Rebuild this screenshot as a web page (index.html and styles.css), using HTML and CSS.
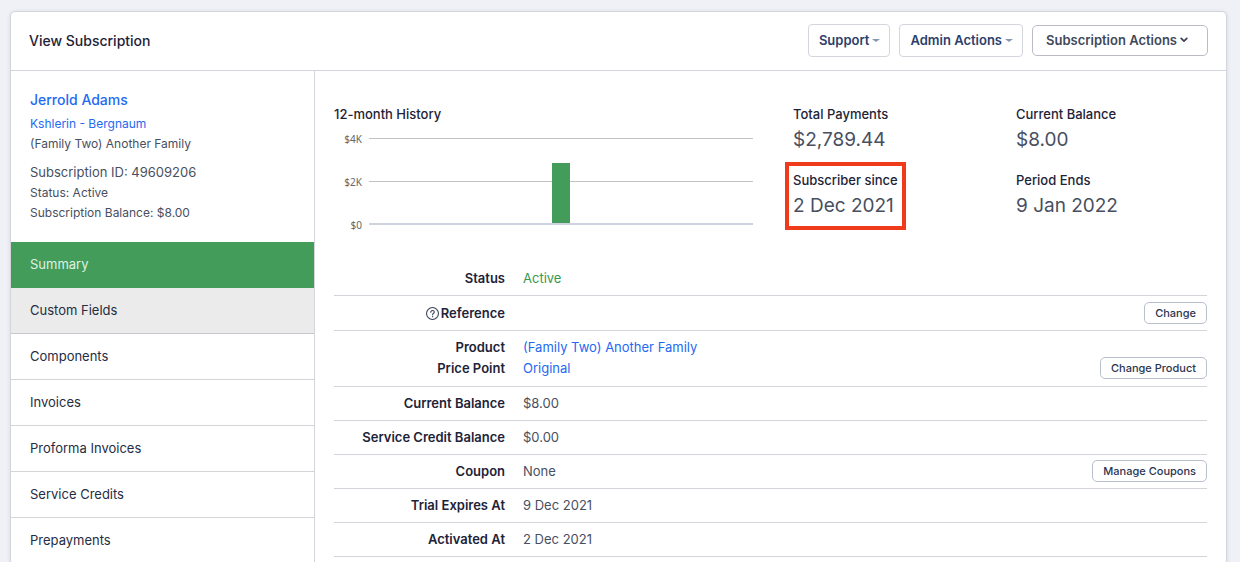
FILE: index.html
```html
<!DOCTYPE html>
<html lang="en">
<head>
<meta charset="utf-8">
<title>View Subscription</title>
<link rel="stylesheet" href="styles.css">
</head>
<body>
<main class="card">
  <header class="card-header">
    <h1 class="title">View Subscription</h1>
    <div class="actions">
      <button class="btn" type="button">Support<span class="caret"></span></button>
      <button class="btn" type="button">Admin Actions<span class="caret"></span></button>
      <button class="btn btn-main" type="button">Subscription Actions<svg class="chevron" viewBox="0 0 8 6" aria-hidden="true"><path d="M1.2 1.3 4 4.1 6.8 1.3"/></svg></button>
    </div>
  </header>
  <div class="columns">
    <aside class="sidebar">
      <div class="profile">
        <a class="name" href="#">Jerrold Adams</a>
        <a class="org" href="#">Kshlerin - Bergnaum</a>
        <p class="small">(Family Two) Another Family</p>
        <p class="sub-id">Subscription ID: 49609206</p>
        <p class="small">Status: Active</p>
        <p class="small">Subscription Balance: $8.00</p>
      </div>
      <nav class="nav">
        <a class="nav-item active" href="#">Summary</a>
        <a class="nav-item hovered" href="#">Custom Fields</a>
        <a class="nav-item" href="#">Components</a>
        <a class="nav-item" href="#">Invoices</a>
        <a class="nav-item" href="#">Proforma Invoices</a>
        <a class="nav-item" href="#">Service Credits</a>
        <a class="nav-item" href="#">Prepayments</a>
      </nav>
    </aside>
    <section class="content">
      <div class="overview">
        <div class="history">
          <h2 class="label">12-month History</h2>
          <div class="chart">
            <div class="axis"><span>$4K</span><span>$2K</span><span>$0</span></div>
            <div class="plot"><div class="bar"></div></div>
          </div>
        </div>
        <dl class="stats">
          <div class="stat"><dt class="label">Total Payments</dt><dd>$2,789.44</dd></div>
          <div class="stat"><dt class="label">Current Balance</dt><dd>$8.00</dd></div>
          <div class="stat highlight"><dt class="label">Subscriber since</dt><dd>2 Dec 2021</dd></div>
          <div class="stat"><dt class="label">Period Ends</dt><dd>9 Jan 2022</dd></div>
        </dl>
      </div>
      <table class="details">
        <tbody>
          <tr><th scope="row">Status</th><td class="ok">Active</td><td class="act"></td></tr>
          <tr class="tall"><th scope="row"><svg class="help" viewBox="0 0 12 12" aria-hidden="true"><circle cx="6" cy="6" r="5.5"/><path d="M4.4 4.9C4.4 3.9 5 3.3 6 3.3s1.7.6 1.7 1.4C7.7 5.8 6.1 5.8 6.1 7.1"/><path d="M6.1 8.6v.4"/></svg>Reference</th><td></td><td class="act"><button class="btn-small" type="button">Change</button></td></tr>
          <tr class="pair"><th scope="row">Product<br>Price Point</th><td><a href="#">(Family Two) Another Family</a><br><a href="#">Original</a></td><td class="act low"><button class="btn-small" type="button">Change Product</button></td></tr>
          <tr><th scope="row">Current Balance</th><td>$8.00</td><td class="act"></td></tr>
          <tr><th scope="row">Service Credit Balance</th><td>$0.00</td><td class="act"></td></tr>
          <tr><th scope="row">Coupon</th><td>None</td><td class="act"><button class="btn-small" type="button">Manage Coupons</button></td></tr>
          <tr><th scope="row">Trial Expires At</th><td>9 Dec 2021</td><td class="act"></td></tr>
          <tr><th scope="row">Activated At</th><td>2 Dec 2021</td><td class="act"></td></tr>
        </tbody>
      </table>
    </section>
  </div>
</main>
</body>
</html>
```

FILE: styles.css
```css
* { box-sizing: border-box; }

html, body { height: 100%; overflow: hidden; }

body {
  margin: 0;
  padding: 11px 13px 0 10px;
  background: #f0f1f6;
  color: #484f5f;
  font: 13px/20px Inter, "Liberation Sans", sans-serif;
}

h1, h2, p, dl, dd { margin: 0; }

a { color: #2469f2; text-decoration: none; }

.card {
  background: #fff;
  border: 1px solid #d3d4dc;
  border-radius: 5px;
  box-shadow: 0 1px 4px rgba(40, 45, 70, 0.12);
}

.card-header {
  display: flex;
  align-items: center;
  justify-content: space-between;
  height: 59px;
  padding: 0 18px;
  border-bottom: 1px solid #d3d4dc;
}

.title { color: #1d2338; font-size: 14px; font-weight: 500; }

.actions { display: flex; align-items: center; gap: 9px; padding-bottom: 2px; }

.btn {
  display: flex;
  align-items: center;
  gap: 3px;
  height: 33px;
  padding: 0 9px 0 10px;
  border: 1px solid #d5d6dd;
  border-radius: 4px;
  background: #fff;
  color: #2d3e6c;
  font: 600 13px/20px Inter, "Liberation Sans", sans-serif;
}

.btn-main {
  height: 31px;
  padding: 0 19px 0 13px;
  border-color: #b9bcc6;
  border-radius: 5px;
  color: #414958;
}

.caret {
  border: 4px solid transparent;
  border-top: 3px solid #8796b1;
  border-bottom: 0;
}

.chevron { width: 8px; height: 6px; fill: none; stroke: #384054; stroke-width: 1.7; stroke-linecap: round; stroke-linejoin: round; }

.columns { display: flex; align-items: stretch; }

.sidebar { flex: 0 0 304px; border-right: 1px solid #d3d4dc; }

.profile { display: flex; flex-direction: column; align-items: flex-start; padding: 19px; }

.name { margin-bottom: 4px; font-size: 14px; font-weight: 500; }
.org { font-size: 12px; }
.small { font-size: 12px; }
.sub-id { margin: 8px 0 1px; }

.nav-item {
  display: block;
  height: 46px;
  padding: 12px 19px;
  border-bottom: 1px solid #d3d4d8;
  color: #252d42;
}

.active { border-color: #449c5a; background: #449c5a; color: #dff2e3; }
.hovered { border-color: #c6c7cf; background: #ebebeb; }

.content { flex: 1; min-width: 0; padding: 33px 19px 0; }

.overview { display: flex; gap: 40px; }

.history { flex: 419 1 0; }

.label { color: #1d2338; font-size: 13px; font-weight: 500; line-height: 20px; }

.chart { display: flex; gap: 7px; margin-top: 9px; }

.axis {
  display: flex;
  flex-direction: column;
  gap: 31px;
  width: 28px;
  color: #666;
  font: 10px/12px "Noto Sans", sans-serif;
  text-align: right;
}

.plot {
  display: flex;
  flex: 1;
  align-items: flex-end;
  justify-content: center;
  height: 87px;
  margin-top: 5px;
  border-bottom: 2px solid #cfd3e0;
  background: linear-gradient(#c3c3c5, #c3c3c5) 0 0 / 100% 1px no-repeat, linear-gradient(#c3c3c5, #c3c3c5) 0 43px / 100% 1px no-repeat;
}

.bar { width: 18px; height: 60px; background: #449c5a; }

.stats { display: grid; flex: 414 1 0; grid-template-columns: 223px 1fr; align-content: start; row-gap: 14px; }

.stat dd { font-size: 19px; line-height: 32px; color: #484f5f; }

.highlight { justify-self: start; outline: 4px solid #ef3b1a; outline-offset: 4px; }

.details { width: 100%; margin-top: 30px; border-collapse: collapse; }

.details tr { height: 34px; border-bottom: 1px solid #d3d4d9; }

.details th {
  width: 171px;
  padding: 0;
  color: #1d2338;
  font-weight: 600;
  text-align: right;
}

.details td { padding: 0 0 0 18px; }
.details .ok { color: #38984f; }
.details .act { text-align: right; }
.details .tall { height: 35px; }
.details .pair { height: 56px; line-height: 21px; }
.details .low { vertical-align: bottom; padding-bottom: 7px; }

.help { width: 13px; height: 13px; margin-right: 2px; vertical-align: -2px; fill: none; stroke: #384054; stroke-width: 1; stroke-linecap: round; }

.btn-small {
  display: inline-block;
  height: 22px;
  padding: 0 10px;
  border: 1px solid #b9bfcc;
  border-radius: 5px;
  background: #fff;
  color: #2b3550;
  font: 500 11px/18px Inter, "Liberation Sans", sans-serif;
  vertical-align: middle;
}
```
